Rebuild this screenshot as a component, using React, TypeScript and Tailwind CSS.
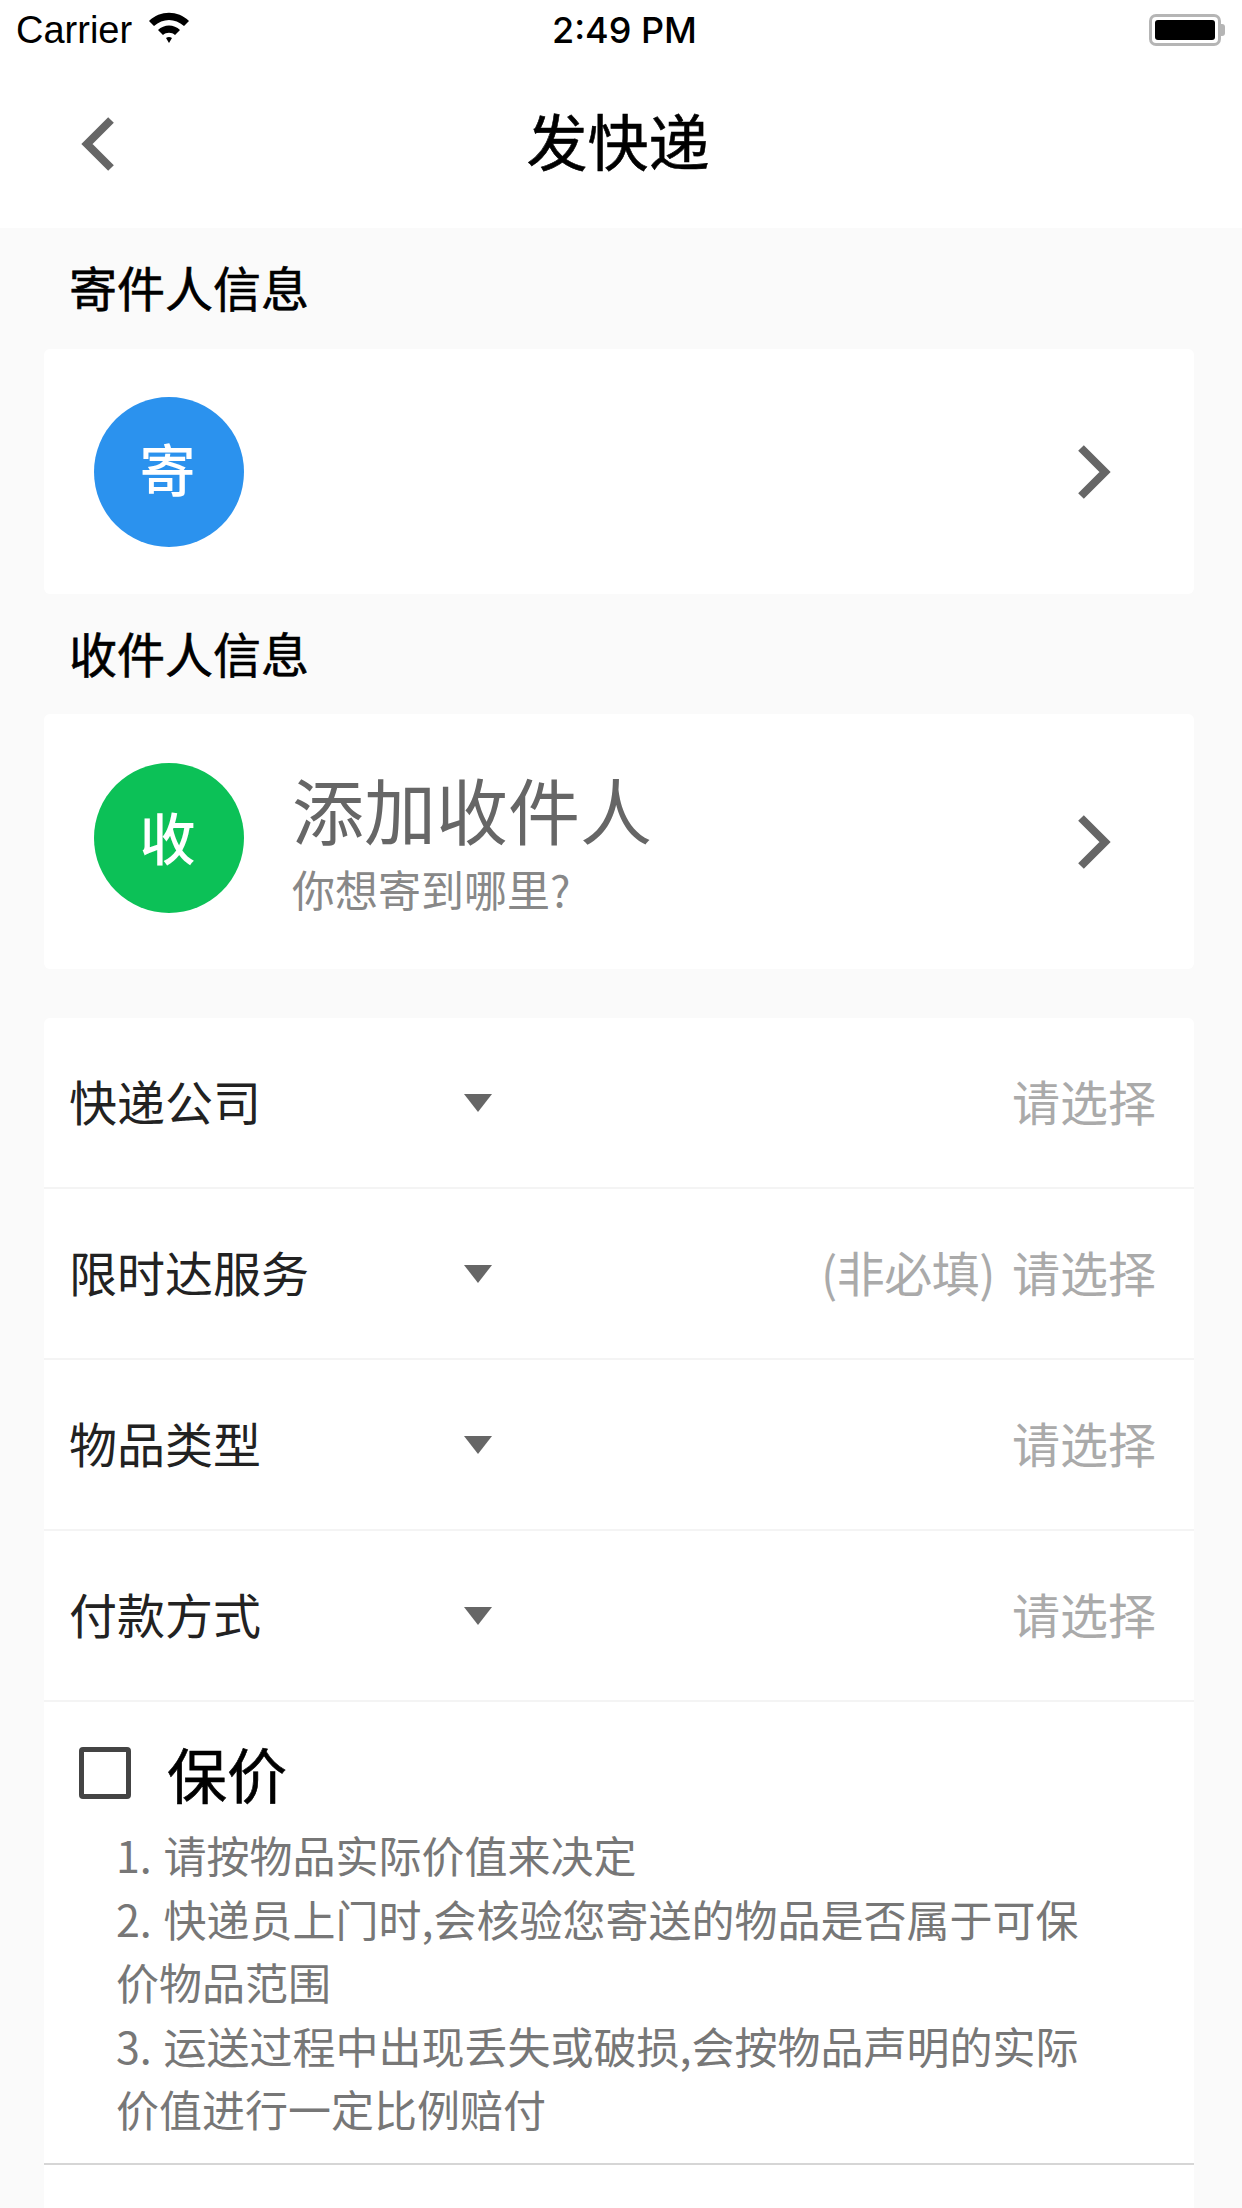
import React from 'react';

const cjk = "font-['Noto_Sans_CJK_SC','Liberation_Sans',sans-serif]";

function ChevronRight() {
  return (
    <svg width="36" height="56" viewBox="0 0 36 56" className="shrink-0" fill="none">
      <path d="M5 4 L29 28 L5 52" stroke="#666666" strokeWidth="8" strokeLinejoin="miter" />
    </svg>
  );
}

function SectionTitle({ title }: { title: string }) {
  return (
    <div className="flex h-[60px] items-center pl-[25px] text-[48px] leading-none text-black [-webkit-text-stroke:0.6px_black]">
      {title}
    </div>
  );
}

interface PersonCardProps {
  label: string;
  badgeClass: string;
  heightClass: string;
  children?: React.ReactNode;
}

function PersonCard({ label, badgeClass, heightClass, children }: PersonCardProps) {
  return (
    <div className={`flex items-center rounded-[6px] bg-white pr-[82px] pl-[50px] ${heightClass}`}>
      <div className={`flex h-[150px] w-[150px] shrink-0 items-center justify-center rounded-full pr-[3px] text-[56px] leading-none font-medium text-white ${badgeClass}`}>
        {label}
      </div>
      <div className="ml-[48px] flex-1">{children}</div>
      <ChevronRight />
    </div>
  );
}

function SelectRow({ label, hint }: { label: string; hint?: string }) {
  return (
    <div className="flex h-[171px] items-center border-b-2 border-[#f4f4f4] pr-[38px] pl-[25px]">
      <div className="mb-[6px] w-[394px] text-[48px] leading-none text-[#222222]">{label}</div>
      <svg width="30" height="20" viewBox="0 0 30 20" className="shrink-0">
        <path d="M1 1 H29 L15 19 Z" fill="#666666" />
      </svg>
      <div className="mb-[6px] ml-auto flex items-center text-[48px] leading-none text-[#aaaaaa]">
        {hint && <span className="mr-[17px] tracking-[-0.5px]">{hint}</span>}
        <span>请选择</span>
      </div>
    </div>
  );
}

export default function App() {
  return (
    <div className={`flex h-[2208px] w-[1242px] flex-col overflow-hidden bg-[#fafafa] ${cjk}`}>
      <div className="bg-white">
        <div className="relative flex h-[60px] items-center justify-between pr-[17px] pl-[16px] font-['Liberation_Sans',sans-serif] text-[38px] leading-none text-black">
          <div className="flex items-center gap-[16px]">
            <span>Carrier</span>
            <svg width="42" height="32" viewBox="0 0 42 32" className="mt-[-4px]">
              <path d="M1 9 C12 -2 30 -2 41 9 L36 14 C27 6 15 6 6 14 Z" fill="#000" />
              <path d="M10 18 C16 12 26 12 32 18 L27 23 C24 20 18 20 15 23 Z" fill="#000" />
              <path d="M18 26 C20 24.5 22 24.5 24 26 L21 31 Z" fill="#000" />
            </svg>
          </div>
          <span className="absolute left-[552px] font-['Inter',sans-serif] text-[36px] font-medium">2:49 PM</span>
          <div className="flex items-center">
            <div className="h-[32px] w-[72px] rounded-[7px] border-[3px] border-[#b5b5b5] p-[3px]">
              <div className="h-full w-full rounded-[3px] bg-black" />
            </div>
            <div className="h-[12px] w-[4px] rounded-r-[3px] bg-[#b5b5b5]" />
          </div>
        </div>
        <div className="relative flex h-[168px] items-center justify-center pr-[6px] pb-[10px]">
          <svg width="36" height="56" viewBox="0 0 36 56" className="absolute top-[56px] left-[80px]" fill="none">
            <path d="M31 4 L7 28 L31 52" stroke="#666666" strokeWidth="8" />
          </svg>
          <span className="text-[61px] leading-none text-black [-webkit-text-stroke:0.6px_black]">发快递</span>
        </div>
      </div>

      <div className="flex flex-1 flex-col pr-[48px] pl-[44px]">
        <div className="mt-[28px] mb-[33px]">
          <SectionTitle title="寄件人信息" />
        </div>
        <PersonCard label="寄" badgeClass="bg-[#2b92ee] pb-[10px]" heightClass="h-[245px]" />
        <div className="mt-[28px] mb-[32px]">
          <SectionTitle title="收件人信息" />
        </div>
        <PersonCard label="收" badgeClass="mb-[8px] bg-[#0cc157] pb-[4px]" heightClass="h-[255px]">
          <div className="mb-[5px]">
            <div className="text-[72px] leading-[84px] text-[#666666]">添加收件人</div>
            <div className="mt-[13px] text-[43px] leading-[50px] text-[#888888]">你想寄到哪里?</div>
          </div>
        </PersonCard>

        <div className="mt-[49px] flex flex-1 flex-col rounded-t-[6px] bg-white">
          <SelectRow label="快递公司" />
          <SelectRow label="限时达服务" hint="(非必填)" />
          <SelectRow label="物品类型" />
          <SelectRow label="付款方式" />
          <div className="border-b-2 border-[#d6d6d6] pr-[100px] pb-[22px] pl-[35px]">
            <div className="mt-[41px] flex items-center">
              <div className="h-[52px] w-[52px] rounded-[4px] border-[5px] border-[#444444]" />
              <span className="ml-[36px] text-[60px] leading-[60px] text-black [-webkit-text-stroke:0.6px_black]">保价</span>
            </div>
            <div className="mt-[20px] pl-[37px] text-[43px] leading-[63.5px] text-[#777777] [word-spacing:2px]">
              <p>1. 请按物品实际价值来决定</p>
              <p>2. 快递员上门时,会核验您寄送的物品是否属于可保价物品范围</p>
              <p>3. 运送过程中出现丢失或破损,会按物品声明的实际价值进行一定比例赔付</p>
            </div>
          </div>
        </div>
      </div>
    </div>
  );
}
